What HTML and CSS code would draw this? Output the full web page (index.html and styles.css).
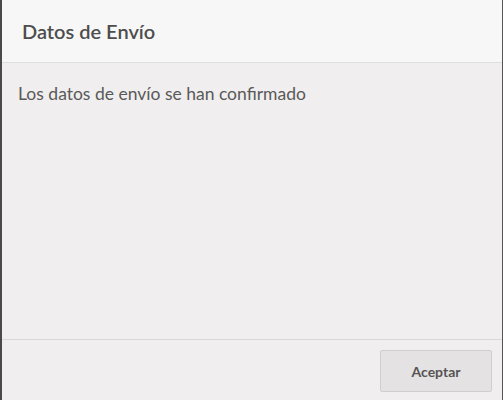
FILE: index.html
```html
<!DOCTYPE html>
<html lang="es">
<head>
<meta charset="utf-8">
<link rel="stylesheet" href="styles.css">
</head>
<body>
<div class="frame">
  <div class="edge-left"></div>
  <div class="dialog">
    <div class="header"><h2 class="title">Datos de Envío</h2></div>
    <div class="content"><p class="message">Los datos de envío se han confirmado</p></div>
    <div class="footer"><button class="btn">Aceptar</button></div>
  </div>
  <div class="edge-right"></div>
</div>
</body>
</html>
```
FILE: styles.css
```css
html, body {
  margin: 0;
  padding: 0;
  height: 100%;
  background: #f0eeee;
}
.frame {
  display: flex;
  height: 400px;
  width: 503px;
  font-family: Lato, "Open Sans", sans-serif;
}
.edge-left {
  width: 2px;
  background: #4a4a4a;
}
.edge-right {
  width: 1px;
  background: #555;
}
.dialog {
  flex: 1;
  display: flex;
  flex-direction: column;
  background: #f0eeee;
}
.header {
  height: 62px;
  background: #f7f7f7;
  border-bottom: 1px solid #dedede;
  display: flex;
  align-items: center;
  padding: 0 20px;
}
.title {
  margin: 0;
  font-size: 20px;
  font-weight: 600;
  color: #4d4d4d;
  padding-bottom: 1px;
}
.content {
  flex: 1;
  padding: 20px 16px;
  border-bottom: 1px solid #d9d7d7;
}
.message {
  margin: 0;
  font-size: 17.5px;
  color: #595959;
}
.footer {
  height: 60px;
  display: flex;
  justify-content: flex-end;
  align-items: flex-start;
  padding: 10px 10px 0 0;
  box-sizing: border-box;
}
.btn {
  width: 112px;
  height: 42px;
  background: #e4e2e2;
  border: 1px solid #d0cece;
  border-radius: 2px;
  font-family: Lato, sans-serif;
  font-weight: 700;
  font-size: 14px;
  color: #555;
  padding: 0;
}
```
